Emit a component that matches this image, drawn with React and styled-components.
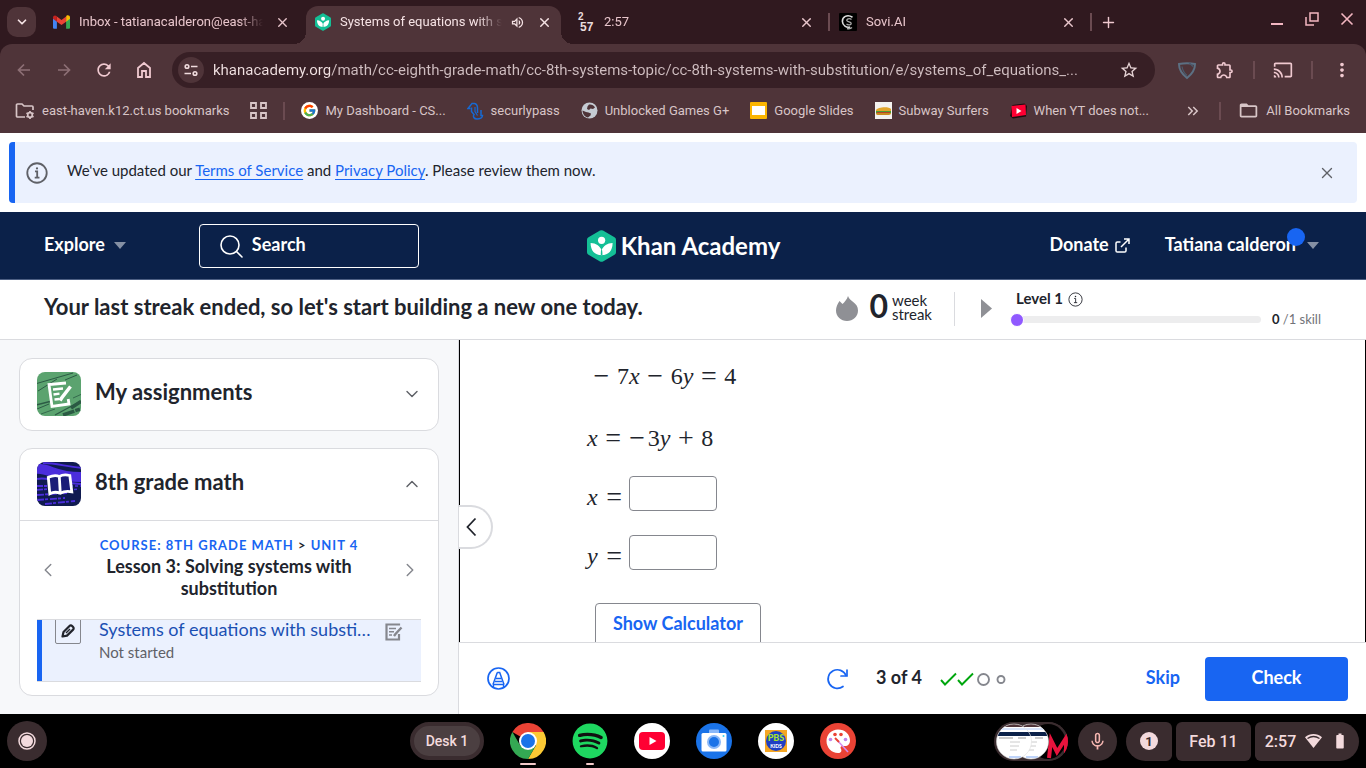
import React, { useState } from "react";
import styled, { createGlobalStyle } from "styled-components";
import { ChevronDown, ChevronUp, ChevronLeft, ChevronRight, X, Plus } from "lucide-react";
import {
  MdRefresh,
  MdOutlineExtension,
  MdCast,
  MdMoreVert,
  MdStarOutline,
  MdOutlineVolumeUp,
  MdFolderOpen,
  MdMicNone,
  MdBatteryFull,
  MdKeyboardDoubleArrowRight,
} from "react-icons/md";
import { FcGoogle } from "react-icons/fc";
import { FaSpotify } from "react-icons/fa";

const GlobalStyle = createGlobalStyle`
  * {
    box-sizing: border-box;
  }
  body {
    margin: 0;
    color: #21242c;
    background: #fff;
    font-family: Lato, "Liberation Sans", sans-serif;
  }
  button {
    padding: 0;
    border: none;
    background: none;
    color: inherit;
    font: inherit;
    cursor: pointer;
  }
  input {
    font: inherit;
    outline: none;
  }
  svg {
    display: block;
    flex: none;
  }
`;

const Screen = styled.div`
  display: flex;
  flex-direction: column;
  height: 100vh;
  overflow: hidden;
`;

/* ---------- browser ---------- */

const Browser = styled.header`
  flex: none;
  background: #30191f;
  color: #e9c6cc;
  font-family: Roboto, sans-serif;
  font-size: 13px;
`;

const TabStrip = styled.div`
  display: flex;
  align-items: center;
  height: 44px;
  padding-left: 7px;
`;

const TabSearch = styled.button`
  display: flex;
  align-items: center;
  justify-content: center;
  width: 29px;
  height: 30px;
  margin-right: 8px;
  border-radius: 10px;
  background: #4f3439;
  color: #f6e3e5;
`;

const Tab = styled.div`
  position: relative;
  display: flex;
  align-items: center;
  flex: 0 1 262px;
  min-width: 0;
  height: ${(props) => (props.$active ? "38px" : "30px")};
  align-self: ${(props) => (props.$active ? "flex-end" : "center")};
  padding: ${(props) => (props.$active ? "0 16px 6px 9px" : "0 16px 0 9px")};
  color: ${(props) => (props.$active ? "#f6e3e5" : "#e9c6cc")};
`;

const TabShape = styled.div`
  position: absolute;
  inset: 0 7px 0 0;
  border-radius: 12px 12px 0 0;
  background: #4f3439;
  &::before,
  &::after {
    content: "";
    position: absolute;
    bottom: 0;
    width: 12px;
    height: 12px;
  }
  &::before {
    right: 100%;
    background: radial-gradient(circle at 0 0, transparent 12px, #4f3439 12px);
  }
  &::after {
    left: 100%;
    background: radial-gradient(circle at 100% 0, transparent 12px, #4f3439 12px);
  }
`;

const TabLabel = styled.span`
  position: relative;
  flex: 1;
  min-width: 0;
  margin: 0 ${(props) => (props.$active ? "8px" : "12px")} 0 9px;
  overflow: hidden;
  white-space: nowrap;
  line-height: 20px;
  mask-image: linear-gradient(to left, transparent 0, #000 24px);
`;

const TabIcon = styled.span`
  position: relative;
  display: flex;
  margin-right: ${(props) => (props.$end ? "12px" : "0")};
`;

const Rule = styled.span`
  flex: none;
  width: 2px;
  height: 18px;
  margin: ${(props) => props.$margin || "0"};
  background: #6b4b51;
`;

const WindowButtons = styled.div`
  display: flex;
  align-items: center;
  gap: 21px;
  margin: 0 12px 6px auto;
  color: #f3b6c1;
`;

const Chrome = styled.div`
  border-radius: 12px 12px 0 0;
  background: #4f3439;
`;

const AddressRow = styled.div`
  display: flex;
  align-items: center;
  height: 52px;
  padding: 0 13px 0 12px;
`;

const NavButton = styled.button`
  display: flex;
  align-items: center;
  justify-content: center;
  width: 24px;
  height: 24px;
  margin: ${(props) => props.$margin || "0 16px 0 0"};
  color: ${(props) => (props.$dim ? "#8d6f75" : "#f0c9d0")};
`;

const Omnibox = styled.div`
  display: flex;
  align-items: center;
  flex: 1;
  height: 36px;
  padding: 0 16px 0 6px;
  border-radius: 18px;
  background: #371f25;
  color: #e6d3d5;
`;

const SiteInfo = styled.button`
  display: flex;
  align-items: center;
  justify-content: center;
  width: 26px;
  height: 26px;
  border-radius: 50%;
  background: #4f3439;
  color: #f0dcde;
`;

const AddressInput = styled.input`
  flex: 1;
  min-width: 0;
  margin: 0 8px 0 9px;
  padding: 0;
  border: none;
  font-size: 15px;
  line-height: 24px;
  color: transparent;
  background: linear-gradient(to right, #f2e2e3 117px, #d0bec1 117px);
  background-clip: text;
  -webkit-background-clip: text;
`;

const Extensions = styled.div`
  display: flex;
  align-items: center;
  gap: 18px;
  margin-left: 22px;
  color: #f0c9d0;
`;

const BookmarkBar = styled.nav`
  display: flex;
  align-items: center;
  gap: 21px;
  height: 37px;
  padding: 0 16px 8px 15px;
  color: #d8c5c7;
`;

const Bookmark = styled.a`
  display: flex;
  align-items: center;
  gap: 7px;
  color: inherit;
  line-height: 20px;
  text-decoration: none;
  white-space: nowrap;
`;

const BookmarkEnd = styled.div`
  display: flex;
  align-items: center;
  gap: 17px;
  margin-left: auto;
`;

/* ---------- site ---------- */

const Notice = styled.div`
  display: flex;
  align-items: center;
  flex: none;
  height: 61px;
  margin: 9px;
  padding: 0 21px 0 11px;
  border-left: 6px solid #1865f2;
  border-radius: 4px;
  background: #ebf1fe;
  font-size: 15px;
`;

const NoticeText = styled.p`
  flex: 1;
  margin: 0 0 6px 19px;
  line-height: 20px;
  a {
    color: #1865f2;
    text-underline-offset: 3px;
  }
`;

const SiteHeader = styled.div`
  display: grid;
  grid-template-columns: 1fr auto 1fr;
  align-items: center;
  flex: none;
  height: 68px;
  padding: 0 47px 0 44px;
  border-bottom: 1px solid #4d5f83;
  background: #0b2149;
  color: #fff;
  font-size: 18px;
  font-weight: 700;
`;

const HeaderSide = styled.div`
  display: flex;
  align-items: center;
  justify-content: ${(props) => (props.$end ? "flex-end" : "flex-start")};
  gap: ${(props) => (props.$end ? "35px" : "73px")};
`;

const HeaderItem = styled.button`
  position: relative;
  display: flex;
  align-items: center;
  gap: ${(props) => props.$gap};
  span {
    line-height: 24px;
    padding-bottom: 4px;
  }
`;

const NotifyDot = styled.i`
  position: absolute;
  top: -4px;
  right: 14px;
  width: 18px;
  height: 18px;
  border-radius: 50%;
  background: #1865f2;
`;

const SearchBox = styled.label`
  display: flex;
  align-items: center;
  width: 220px;
  height: 44px;
  padding-left: 19px;
  border: 1px solid #fff;
  border-radius: 4px;
  input {
    width: 150px;
    margin-left: 9px;
    padding: 0 0 4px;
    border: none;
    background: none;
    color: #fff;
    line-height: 24px;
  }
  input::placeholder {
    color: #fff;
    opacity: 1;
  }
`;

const Logo = styled.a`
  display: flex;
  align-items: center;
  gap: 5px;
  padding-left: 4px;
  color: #fff;
  font-size: 24px;
  font-weight: 700;
  line-height: 32px;
  text-decoration: none;
`;

const StreakBar = styled.section`
  display: flex;
  align-items: center;
  flex: none;
  height: 60px;
  padding: 0 45px 2px 44px;
  border-bottom: 1px solid #dadbdf;
`;

const StreakTitle = styled.h2`
  flex: 1;
  margin: 0;
  padding-bottom: 4px;
  font-size: 22px;
  line-height: 28px;
`;

const StreakCount = styled.div`
  display: flex;
  align-items: center;
  gap: 4px;
  margin-left: 11px;
  padding-right: 22px;
  height: 34px;
  border-right: 1px solid #dadbdf;
  font-size: 15px;
  line-height: 14px;
  span {
    padding-bottom: 4px;
  }
  strong {
    font-size: 32px;
    line-height: 32px;
    padding-bottom: 5px;
  }
`;

const Level = styled.div`
  display: flex;
  flex-direction: column;
  width: 305px;
`;

const LevelTitle = styled.div`
  display: flex;
  align-items: center;
  gap: 5px;
  height: 21px;
  font-size: 15px;
  font-weight: 700;
  line-height: 20px;
  span {
    padding-bottom: 4px;
  }
`;

const LevelRow = styled.div`
  display: flex;
  align-items: center;
  justify-content: space-between;
  color: #717378;
  font-size: 13px;
  line-height: 18px;
  white-space: nowrap;
  strong {
    color: #21242c;
  }
`;

const Track = styled.div`
  position: relative;
  width: 245px;
  height: 7px;
  border-radius: 4px;
  background: #ededee;
`;

const Knob = styled.div`
  position: absolute;
  top: -3px;
  left: -6px;
  width: 14px;
  height: 14px;
  border: 1px solid #fff;
  border-radius: 50%;
  background: #9059ff;
`;

const Main = styled.main`
  display: flex;
  flex: 1;
  min-height: 0;
`;

const Sidebar = styled.aside`
  display: flex;
  flex-direction: column;
  gap: 17px;
  flex: none;
  width: 459px;
  padding: 18px 19px;
  border-right: 1px solid #dadbdf;
  background: #f7f8fa;
`;

const Card = styled.section`
  min-width: 0;
  border: 1px solid #dadbdf;
  border-radius: 13px;
  background: #fff;
`;

const CardHead = styled.button`
  display: flex;
  align-items: center;
  gap: 14px;
  width: 100%;
  height: 71px;
  padding: 0 16px 1px 17px;
  font-size: 22px;
  font-weight: 700;
  color: #21242c;
  text-align: left;
  span {
    flex: 1;
    line-height: 28px;
    padding-bottom: 4px;
  }
`;

const CardBody = styled.div`
  padding: 0 17px 13px;
  border-top: 1px solid #dadbdf;
`;

const LessonNav = styled.div`
  display: flex;
  align-items: center;
  justify-content: space-between;
  height: 98px;
`;

const LessonTitle = styled.div`
  width: 270px;
  padding-bottom: 4px;
  text-align: center;
  h3 {
    margin: 0 0 2px;
    font-size: 18px;
    line-height: 22px;
  }
`;

const Crumbs = styled.div`
  font-size: 13px;
  font-weight: 700;
  line-height: 20px;
  letter-spacing: 1px;
  text-transform: uppercase;
  a {
    color: #1865f2;
    text-decoration: none;
  }
`;

const LessonList = styled.div`
  display: flex;
  flex-direction: column;
  justify-content: flex-end;
  height: 63px;
  overflow: hidden;
  border-top: 1px solid #dadbdf;
  border-bottom: 1px solid #dadbdf;
`;

const LessonRow = styled.a`
  display: flex;
  align-items: flex-start;
  flex: none;
  height: 75px;
  padding: 12px 18px 0 13px;
  border-left: 5px solid #1865f2;
  background: #ebf1fe;
  color: #1b50b3;
  text-decoration: none;
`;

const PencilBox = styled.span`
  display: flex;
  align-items: center;
  justify-content: center;
  flex: none;
  width: 26px;
  height: 26px;
  border: 1px solid #85878e;
  border-radius: 2px;
  color: #21242c;
`;

const LessonText = styled.span`
  display: flex;
  flex-direction: column;
  flex: 1;
  gap: 1px;
  min-width: 0;
  margin: 0 10px 0 18px;
  font-size: 18px;
  line-height: 22px;
  b {
    overflow: hidden;
    font-weight: 400;
    text-overflow: ellipsis;
    white-space: nowrap;
  }
  small {
    color: #5f6167;
    font-size: 15px;
  }
`;

const Content = styled.div`
  position: relative;
  display: flex;
  flex: 1;
  flex-direction: column;
  min-width: 0;
`;

const CollapseButton = styled.button`
  position: absolute;
  top: 165px;
  left: 0;
  display: flex;
  align-items: center;
  width: 34px;
  height: 44px;
  padding-left: 5px;
  border: 2px solid #dadbdf;
  border-left: none;
  border-radius: 0 22px 22px 0;
  background: #fff;
`;

const Exercise = styled.form`
  flex: 1;
  min-height: 0;
  overflow: hidden;
  padding: 12px 127px 0;
  border: solid #000;
  border-width: 0 1px;
`;

const MathRow = styled.div`
  display: flex;
  align-items: center;
  gap: ${(props) => (props.$answer ? "6px" : "7px")};
  height: ${(props) => (props.$answer ? "35px" : "48px")};
  margin-bottom: ${(props) => (props.$answer ? "24px" : "14px")};
  padding-left: ${(props) => (props.$shift ? "6px" : "0")};
  font-family: "Liberation Serif", serif;
  font-size: 24px;
  line-height: 28px;
`;

const MathLabel = styled.label`
  display: flex;
  gap: 8px;
  padding-top: 7px;
`;

const Op = styled.span`
  width: 17px;
  margin-right: ${(props) => (props.$sign ? "-5px" : "0")};
  font-size: 28px;
  text-align: center;
`;

const AnswerInput = styled.input`
  width: 88px;
  height: 35px;
  padding: 0 8px;
  border: 1px solid #85878e;
  border-radius: 4px;
  background: #fff;
  font-size: 20px;
`;

const CalculatorButton = styled.button`
  display: block;
  width: 166px;
  height: 44px;
  margin: 33px 0 0 8px;
  padding-bottom: 4px;
  border: 1px solid #85878e;
  border-radius: 4px;
  color: #1865f2;
  font-size: 18px;
  font-weight: 700;
`;

const TaskFooter = styled.footer`
  display: flex;
  align-items: center;
  flex: none;
  height: 72px;
  padding: 0 18px 0 28px;
  border-top: 1px solid #dadbdf;
  font-size: 18px;
  font-weight: 700;
`;

const Progress = styled.div`
  display: flex;
  align-items: center;
  gap: 18px;
  margin: 0 140px 0 auto;
`;

const FooterLabel = styled.span`
  padding: 0 0 4px 10px;
  line-height: 24px;
`;

const SkipButton = styled.button`
  padding-bottom: 4px;
  color: #1865f2;
`;

const CheckButton = styled.button`
  width: 143px;
  height: 44px;
  margin-left: 25px;
  padding-bottom: 4px;
  border-radius: 4px;
  background: #1865f2;
  color: #fff;
`;

/* ---------- shelf ---------- */

const Shelf = styled.footer`
  display: grid;
  grid-template-columns: 1fr auto 1fr;
  align-items: center;
  flex: none;
  height: 54px;
  padding: 0 7px;
  background: #000;
  color: #f3dadd;
  font-family: Roboto, sans-serif;
  font-size: 16px;
  font-weight: 500;
`;

const ShelfStart = styled.div`
  display: flex;
  align-items: center;
  justify-content: space-between;
  padding-right: 26px;
`;

const Launcher = styled.button`
  display: flex;
  align-items: center;
  justify-content: center;
  width: 40px;
  height: 40px;
  border-radius: 50%;
  background: #3a2c2f;
`;

const DeskButton = styled.button`
  width: 74px;
  height: 38px;
  border: 4px solid #3a2c2f;
  border-radius: 19px;
  background: #4b3f41;
  font-size: 14px;
`;

const Apps = styled.div`
  display: flex;
  gap: 26px;
`;

const AppButton = styled.button`
  position: relative;
  width: 36px;
  height: 36px;
  &::after {
    content: "";
    position: absolute;
    top: 40px;
    left: 50%;
    width: ${(props) => props.$mark || 0}px;
    height: 2px;
    border-radius: 1px;
    background: #f3c9c9;
    transform: translateX(-50%);
  }
`;

const Tray = styled.div`
  display: flex;
  align-items: center;
  justify-content: flex-end;
  gap: 4px;
`;

const TrayButton = styled.button`
  display: flex;
  align-items: center;
  justify-content: center;
  gap: 9px;
  width: ${(props) => props.$width};
  height: 39px;
  margin-right: ${(props) => props.$space || "0"};
  border-radius: ${(props) => props.$radius || "6px"};
  background: #3a2c2f;
  overflow: hidden;
`;

/* ---------- drawings ---------- */

const KhanMark = ({ width = 29, height = 32 }) => (
  <svg width={width} height={height} viewBox="0 0 29 32">
    <path
      d="M13 .6a3 3 0 0 1 3 0l11.5 6.6A3 3 0 0 1 29 9.800v12.400a3 3 0 0 1-1.500 2.600L16 31.400a3 3 0 0 1-3 0L1.500 24.800A3 3 0 0 1 0 22.200V9.800a3 3 0 0 1 1.500-2.600z"
      fill="#14bf96"
    />
    <circle cx="14.600" cy="10.300" r="3.600" fill="#fff" />
    <path
      d="M3.600 13c5.500.2 9 3 11 6.900 2-3.900 5.500-6.700 11-6.900 0 7.500-4 12.200-11 12.200S3.600 20.500 3.600 13z"
      fill="#fff"
    />
    <path d="M13.800 25.200v-2c0-2 .3-3.200.8-4.300.5 1.100.8 2.300.8 4.300v2z" fill="#14bf96" />
  </svg>
);

const GmailIcon = () => (
  <svg width="17" height="14" viewBox="0 0 24 19">
    <path d="M0 3v14.500A1.500 1.500 0 0 0 1.500 19H5.500V8z" fill="#4285f4" />
    <path d="M24 3v14.500a1.500 1.500 0 0 1-1.500 1.500h-4V8z" fill="#34a853" />
    <path d="M18.500 2v7L24 5V3c0-2.600-3-3.800-5-2.300z" fill="#fbbc04" />
    <path d="M5.500 9V1.600L12 6.500l6.500-4.900V9L12 13.900z" fill="#ea4335" />
    <path d="M0 3v2l5.500 4V1.600L5 1.100C3-.8 0 .4 0 3z" fill="#c5221f" />
  </svg>
);

const SoviIcon = () => (
  <svg width="18" height="18" viewBox="0 0 18 18">
    <rect width="18" height="18" rx="1" fill="#000" />
    <path d="M13.500 4.200C8 .8 3.200 4 3.400 8.500c.2 4 4 6.500 7.800 5.400" fill="none" stroke="#ddd" strokeWidth="1.600" />
    <path d="M12.500 6.500c-2-1.600-5.300-.6-4.600 1.200.6 1.500 4.300.7 4.300 2.700 0 1.700-3.200 1.800-4.700.5M8 15.500c2 .5 4 0 5-1" fill="none" stroke="#aaa" strokeWidth="1.300" />
  </svg>
);

const ClockFavicon = () => (
  <svg width="18" height="22" viewBox="0 0 18 22" fontFamily="Liberation Sans" fontWeight="700" fill="#e8dcdd">
    <text x="1" y="9" fontSize="10">2</text>
    <text x="3" y="20" fontSize="12">57</text>
  </svg>
);

const ArrowIcon = ({ flip }) => (
  <svg width="16" height="16" viewBox="0 0 16 16" fill="none" stroke="currentColor" strokeWidth="1.700">
    {flip ? <path d="M2 8h11M8 2.500 13.500 8 8 13.500" /> : <path d="M14 8H3M8 2.500 2.500 8 8 13.500" />}
  </svg>
);

const HomeIcon = () => (
  <svg width="16" height="18" viewBox="0 0 16 18" fill="none" stroke="currentColor" strokeWidth="1.800">
    <path d="M2 7 8 2l6 5v9h-4v-6H6v6H2z" />
  </svg>
);

const TuneIcon = () => (
  <svg width="14" height="14" viewBox="0 0 14 14" fill="none" stroke="currentColor" strokeWidth="1.600">
    <circle cx="3" cy="3.500" r="1.800" />
    <circle cx="11" cy="10.500" r="1.800" />
    <path d="M7 3.500h6.500M.5 10.500H7" />
  </svg>
);

const ShieldIcon = () => (
  <svg width="20" height="20" viewBox="0 0 20 20" fill="none" stroke="#5c7083" strokeWidth="2">
    <path d="M2 4c5-1 11-1 16 0 0 5.500-3.500 10.500-8 14-4.500-3.500-8-8.500-8-14z" />
    <path d="M5 6.500c.5 3.500 2 6.500 5 9M12 2.500l4 4" stroke="#4a5a6c" strokeWidth="1.200" />
  </svg>
);

const FolderGear = () => (
  <svg width="20" height="18" viewBox="0 0 20 18" fill="none" stroke="currentColor" strokeWidth="1.700">
    <path d="M10 15H2.500A1 1 0 0 1 1.500 14V3a1 1 0 0 1 1-1H7l2 2h8a1 1 0 0 1 1 1v3" />
    <circle cx="15" cy="13" r="2.300" />
    <path d="M15 9v1.500M15 15.500V17M11.500 11l1.300.8M17.200 14.200l1.300.8M11.500 15l1.300-.8M17.200 11.800l1.300-.8" />
  </svg>
);

const AppsIcon = () => (
  <svg width="17" height="17" viewBox="0 0 17 17" fill="none" stroke="currentColor" strokeWidth="1.800">
    <path d="M1 1h5v5H1zM11 1h5v5h-5zM1 11h5v5H1zM11 11h5v5h-5z" />
  </svg>
);

const GoogleIcon = () => (
  <svg width="17" height="17" viewBox="0 0 17 17">
    <circle cx="8.500" cy="8.500" r="8.500" fill="#fff" />
    <FcGoogle x="1.500" y="1.500" size={14} />
  </svg>
);

const SecurlyIcon = () => (
  <svg width="17" height="18" viewBox="0 0 17 18" fill="none" stroke="#1769d2" strokeWidth="1.500">
    <path d="M3.500 6.500H1L5 1.500h2.500C10 2 10.500 4 10.500 6v5" />
    <path d="M4.500 5.500v4L7 12.500C5.500 14.500 7 17 10 17s5.500-1.500 5.500-3.500h-1.500V8" />
    <path d="M8 5v4.500l2.500 4" strokeWidth="1.200" />
  </svg>
);

const GlobeIcon = () => (
  <svg width="17" height="17" viewBox="0 0 17 17">
    <circle cx="8.500" cy="8.500" r="8" fill="#c5cbd3" />
    <path d="M8 2.500c2-.5 5 .5 6 3l-2 1.500-2.500-.5L8 8 6 7l.5-2.500z" fill="#4f3439" />
    <path d="M1.500 8.500 5 10l2.500.5 2.500 1-.5 2L7 15.500C4 15 1.500 12 1.500 8.500z" fill="#4f3439" />
  </svg>
);

const SlidesIcon = () => (
  <svg width="17" height="17" viewBox="0 0 17 17">
    <rect width="17" height="17" rx="1" fill="#fbb500" />
    <rect x="2" y="4" width="13" height="9" fill="#fff" />
  </svg>
);

const SubwayIcon = () => (
  <svg width="17" height="17" viewBox="0 0 17 17">
    <rect width="17" height="17" fill="#f4f2ef" />
    <path d="M1 8c1-3 13-4 15-1v2H1z" fill="#e2a52b" />
    <path d="M1 9h15v2H1z" fill="#4a9c36" />
    <path d="M2 10h13v1H2z" fill="#b5432a" />
    <path d="M1 11h15c0 2-2 2-4 2H4c-2 0-3 0-3-2z" fill="#c98a1e" />
  </svg>
);

const TiltedPlay = () => (
  <svg width="17" height="16" viewBox="0 0 17 16">
    <path d="m2.500 2 12-1.500L17 3l-1 10.500L3 15.500 0 13z" fill="#1c0b0e" />
    <path d="m1.500 3 14-1.500.5 10.500L2 14z" fill="#ff0033" />
    <path d="M6.500 5v6l5-3z" fill="#fff" />
  </svg>
);

const InfoIcon = ({ size, color, weight }) => (
  <svg width={size} height={size} viewBox="0 0 24 24" fill="none" stroke={color} strokeWidth={weight}>
    <circle cx="12" cy="12" r="10.600" />
    <path d="M9.800 10.300h2.400V17M9.500 17h5.200" />
    <circle cx="12" cy="7" r="1.200" fill={color} stroke="none" />
  </svg>
);

const SearchIcon = () => (
  <svg width="24" height="24" viewBox="0 0 24 24" fill="none" stroke="currentColor" strokeWidth="1.600">
    <circle cx="11" cy="11" r="9" />
    <path d="m17.500 17.500 5.500 5.500" strokeLinecap="round" />
  </svg>
);

const Caret = () => (
  <svg width="12" height="7" viewBox="0 0 12 7">
    <path d="M0 0h12L6 7z" fill="#8590a4" />
  </svg>
);

const ExternalIcon = () => (
  <svg width="15" height="15" viewBox="0 0 15 15" fill="none" stroke="currentColor" strokeWidth="1.500">
    <path d="M5.500 4H2.300C1.400 4 1 4.400 1 5.200v7.500c0 .8.400 1.300 1.300 1.300h7.400c.8 0 1.300-.5 1.300-1.300V9.500M6 9l8-8M9 1h5v5" />
  </svg>
);

const FlameIcon = () => (
  <svg width="22" height="25" viewBox="0 0 22 25">
    <path d="M12 0c1 3 3.200 4.500 5.200 6C20 8.200 22 10.500 22 14.500 22 20.500 17 25 11 25S0 20.500 0 14.500C0 11 1.500 8 3.500 5l3 3C8.500 6 11 3.500 12 0z" fill="#8f9095" />
  </svg>
);

const AssignmentArt = () => (
  <svg width="44" height="44" viewBox="0 0 44 44">
    <clipPath id="art-a">
      <rect width="44" height="44" rx="8" />
    </clipPath>
    <g clipPath="url(#art-a)">
      <rect width="44" height="44" fill="#5ba36f" />
      <g fill="none" stroke="#2b5a44">
        <path d="M-2 12 36 1M1 19 20 7M0 37l12-5M28 8l12-5" strokeWidth="1" />
        <path d="M18 43 44 29M-1 33l16-4" strokeWidth="1.300" />
        <path d="m26 43 20-7M34 36l12-8" strokeWidth="3.500" strokeDasharray="12 1 5 2" />
        <path d="m4 42 14-5M36 26l9-4" strokeWidth=".8" />
      </g>
      <g fill="none" stroke="#fff" strokeWidth="2.800">
        <path d="m29 11-17 1.500 3 22 17-2.500-.8-5" />
        <path d="m16 17.500 10-1M16.500 22.500l6-.8M17.500 27.500l5-.5" strokeWidth="2.300" />
        <path d="M33.500 14.500 25 25.500l-2 3" strokeWidth="3.500" />
      </g>
    </g>
  </svg>
);

const BookArt = () => (
  <svg width="44" height="44" viewBox="0 0 44 44">
    <clipPath id="art-b">
      <rect width="44" height="44" rx="8" />
    </clipPath>
    <g clipPath="url(#art-b)">
      <rect width="44" height="44" fill="#101b50" />
      <g fill="none" stroke="#4b2ddc">
        <path d="M-2 7c14-2 20 9 48 8" strokeWidth="10" />
        <path d="M0 17c10-3 30 5 45 5M6 1c14 0 24 4 40 5" strokeWidth="2" />
        <path d="M-1 24h16M-1 28l13-1M0 33l30-2M0 38l28-2M8 42l30-3" strokeWidth="1.800" strokeDasharray="7 1 3 2" />
        <path d="M33 24h12M32 28l10-1" strokeWidth="1.500" strokeDasharray="3 2" />
      </g>
      <path
        d="M22.300 14.500c-3-1.500-7-1-11 .8l1.500 16.500c3.500-2 7-2 10.500-.5 3.500-2 6.500-2.500 11.500-1.500l-2-16.300c-4-.9-7.500-.8-10.500 1zM22.300 14.500l1 17"
        fill="#1a1c78"
        stroke="#fff"
        strokeWidth="2.800"
      />
    </g>
  </svg>
);

const PencilIcon = () => (
  <svg width="14" height="14" viewBox="0 0 14 14">
    <path d="M1.500 12.500 2.500 8 8.500 2a1.800 1.800 0 0 1 2.600 0l1 1a1.800 1.800 0 0 1 0 2.600L6 11.600z" fill="none" stroke="currentColor" strokeWidth="2.200" strokeLinejoin="round" />
    <path d="M5 9 9 5" stroke="currentColor" strokeWidth="1.400" />
  </svg>
);

const SheetIcon = () => (
  <svg width="18" height="24" viewBox="0 -5 18 24" fill="none" stroke="#85878e" strokeWidth="2.200">
    <path d="M14 2.500V1.500H1.500v15H14V11" />
    <path d="M4 5.500h7M4 8.800h5M4 12h3" strokeWidth="1.600" />
    <path d="m16.500 4.500-6 6.500-1.500 2" strokeWidth="2.400" />
  </svg>
);

const AnnotateIcon = () => (
  <svg width="23" height="23" viewBox="0 0 23 23" fill="none" stroke="#1865f2">
    <circle cx="11.500" cy="11.500" r="10.500" strokeWidth="1.700" />
    <path d="M10.300 5.500h2.400L17 17.500M10.300 5.500 6 17.500M9 11.500h5M8 14.500h7" strokeWidth="1.500" />
    <path d="M6.500 20.500v-3h10v3" strokeWidth="1.400" />
  </svg>
);

const RestartIcon = () => (
  <svg width="22" height="22" viewBox="0 0 22 22" fill="none" stroke="#1865f2" strokeWidth="1.700" strokeLinecap="round">
    <path d="M20 7.500A9.300 9.300 0 1 0 17 18.500" />
    <path d="M21 2v6h-6" />
  </svg>
);

const ResultMarks = () => (
  <svg width="66" height="16" viewBox="0 0 66 16" fill="none" strokeWidth="1.900">
    <path d="m1 9 4 4.500L16 2.500M18 9l4 4.500L33 2.500" stroke="#00a60e" />
    <circle cx="43.500" cy="8.500" r="5.500" stroke="#85878e" />
    <circle cx="61" cy="8.500" r="3.500" stroke="#85878e" />
  </svg>
);

const ChromeIcon = () => (
  <svg width="36" height="36" viewBox="0 0 36 36">
    <path d="M18 18 2.400 9A18 18 0 0 1 33.600 9z" fill="#ea4335" />
    <path d="M18 9h15.600A18 18 0 0 1 18 36l7.800-13.500z" fill="#fbc934" />
    <path d="M18 36A18 18 0 0 1 2.400 9l7.800 13.500L18 27l7.800-4.500z" fill="#34a853" />
    <circle cx="18" cy="18" r="9" fill="#fff" />
    <circle cx="18" cy="18" r="7" fill="#1a73e8" />
  </svg>
);

const SpotifyIcon = () => (
  <svg width="36" height="36" viewBox="0 0 36 36">
    <circle cx="18" cy="18" r="17" fill="#111" />
    <FaSpotify size={36} color="#1ed760" />
  </svg>
);

const YoutubeIcon = () => (
  <svg width="36" height="36" viewBox="0 0 36 36">
    <circle cx="18" cy="18" r="18" fill="#fff" />
    <rect x="5" y="9" width="26" height="18" rx="4" fill="#ff0033" />
    <path d="M15.500 14v8l7-4z" fill="#fff" />
  </svg>
);

const CameraIcon = () => (
  <svg width="36" height="36" viewBox="0 0 36 36">
    <circle cx="18" cy="18" r="18" fill="#1a73e8" />
    <path d="M13 9V7.500A1 1 0 0 1 14 6.500h8a1 1 0 0 1 1 1V10H13z" fill="#8ab8f8" />
    <rect x="5.500" y="10" width="25" height="18.500" rx="1.500" fill="#fff" />
    <circle cx="18" cy="19" r="7" fill="#8ab8f8" />
    <circle cx="18" cy="19" r="5" fill="#1a73e8" />
    <circle cx="27.500" cy="13" r="1" fill="#38d3f5" />
  </svg>
);

const PbsIcon = () => (
  <svg width="36" height="36" viewBox="0 0 36 36" fontFamily="Lato" fontWeight="900" textAnchor="middle">
    <circle cx="18" cy="18" r="18" fill="#fff" />
    <rect x="7" y="7" width="22" height="22" fill="#f5a623" />
    <circle cx="18" cy="18" r="10" fill="#1f3fc4" />
    <text x="18" y="18" fontSize="9" fill="#a6e22e">PBS</text>
    <text x="18" y="25" fontSize="5" fill="#fff">KIDS</text>
  </svg>
);

const PaletteIcon = () => (
  <svg width="36" height="36" viewBox="0 0 36 36">
    <circle cx="18" cy="18" r="18" fill="#ea4335" />
    <path d="M18 6.500c7 0 12 4.800 12 11 0 3.500-2 5.500-5 5.500h-2.500c-2 0-2.500 1.500-1.500 3 1 2 0 4-3 4C11.500 30 6.500 24.500 6.500 18S11.500 6.500 18 6.500z" fill="#fff" />
    <circle cx="10.500" cy="16.500" r="1.800" fill="#c084e8" />
    <circle cx="15" cy="11.500" r="1.800" fill="#ea4335" />
    <circle cx="21" cy="11.500" r="1.800" fill="#ea4335" />
    <circle cx="25.500" cy="16.500" r="1.800" fill="#c084e8" />
    <path d="m17 17 11 12" stroke="#d58cf0" strokeWidth="1.600" />
    <path d="m15 15 4 4" stroke="#ea4335" strokeWidth="2" />
  </svg>
);

const TotePreview = () => (
  <svg width="73" height="39" viewBox="0 0 73 39">
    <rect width="73" height="39" rx="19.500" fill="#3a2c2f" />
    <circle cx="53" cy="19.500" r="17.500" fill="#000" />
    <path d="M54 36 56 18l6 12 9-14v17" fill="none" stroke="#e9133d" strokeWidth="4" />
    {[36, 19].map((cx, i) => (
      <g key={cx}>
        <clipPath id={`tote-${i}`}>
          <circle cx={cx} cy="19.500" r="17.500" />
        </clipPath>
        <g clipPath={`url(#tote-${i})`}>
          <rect x={cx - 18} width="36" height="39" fill="#fff" />
          <rect x={cx - 18} width="36" height="5" fill="#4f3439" />
          <rect x={cx - 18} y="6" width="36" height="2" fill="#d7e3fa" />
          <rect x={cx - 18} y="10" width="36" height="4" fill="#0b2149" />
          <path d={`M${cx - 15} 16h14M${cx + 4} 16h8`} stroke="#999" />
          <path d={`M${cx - 4} 20h10M${cx - 4} 24h9M${cx - 4} 28h7`} stroke="#ccc" />
          <path d={`M${cx - 5} 35h12`} stroke="#7fa8f5" />
        </g>
        <circle cx={cx} cy="19.500" r="17.500" fill="none" stroke="#ddd" strokeWidth=".6" />
      </g>
    ))}
  </svg>
);

const WifiIcon = () => (
  <svg width="17" height="14" viewBox="0 0 17 14">
    <path d="M8.500 14 0 3.200C5-1 12-1 17 3.200z" fill="currentColor" />
    <path d="M2.500 4.500c4-2.700 8-2.700 12 0" fill="none" stroke="#3a2c2f" strokeWidth="1.300" />
  </svg>
);

/* ---------- page ---------- */

const bookmarks = [
  { name: "My Dashboard - CS...", icon: <GoogleIcon /> },
  { name: "securlypass", icon: <SecurlyIcon /> },
  { name: "Unblocked Games G+", icon: <GlobeIcon /> },
  { name: "Google Slides", icon: <SlidesIcon /> },
  { name: "Subway Surfers", icon: <SubwayIcon /> },
  { name: "When YT does not...", icon: <TiltedPlay /> },
];

const tabs = [
  { name: "Inbox - tatianacalderon@east-haven", icon: <GmailIcon /> },
  { name: "Systems of equations with substitution", icon: <KhanMark width={16} height={18} />, active: true },
  { name: "2:57", icon: <ClockFavicon />, rule: true },
  { name: "Sovi.AI", icon: <SoviIcon />, rule: true },
];

const apps = [
  { name: "Chrome", icon: <ChromeIcon />, mark: 16 },
  { name: "Spotify", icon: <SpotifyIcon />, mark: 8 },
  { name: "YouTube", icon: <YoutubeIcon /> },
  { name: "Camera", icon: <CameraIcon /> },
  { name: "PBS Kids", icon: <PbsIcon /> },
  { name: "Canvas", icon: <PaletteIcon /> },
];

const BrowserBar = () => {
  const [url, setUrl] = useState(
    "khanacademy.org/math/cc-eighth-grade-math/cc-8th-systems-topic/cc-8th-systems-with-substitution/e/systems_of_equations_..."
  );

  return (
    <Browser>
      <TabStrip>
        <TabSearch aria-label="Search tabs">
          <ChevronDown size={14} strokeWidth={3} />
        </TabSearch>
        {tabs.map((tab) => (
          <React.Fragment key={tab.name}>
            <Tab $active={tab.active}>
              {tab.active && <TabShape />}
              <TabIcon>{tab.icon}</TabIcon>
              <TabLabel $active={tab.active}>{tab.name}</TabLabel>
              {tab.active && (
                <TabIcon $end>
                  <MdOutlineVolumeUp size={15} />
                </TabIcon>
              )}
              <TabIcon as="button" aria-label="Close tab">
                <X size={15} strokeWidth={2.2} />
              </TabIcon>
            </Tab>
            {tab.rule && <Rule $margin="0 0 0 -2px" />}
          </React.Fragment>
        ))}
        <NavButton aria-label="New tab" $margin="0 16px 0 4px">
          <Plus size={17} strokeWidth={2} />
        </NavButton>
        <WindowButtons>
          <button aria-label="Minimize">
            <svg width="14" height="14" viewBox="0 0 14 14" stroke="currentColor" strokeWidth="2">
              <path d="M1 12h12" />
            </svg>
          </button>
          <button aria-label="Restore">
            <svg width="14" height="14" viewBox="0 0 14 14" fill="none" stroke="currentColor" strokeWidth="1.500">
              <path d="M5 1h8v8H5zM1 5v8h8" />
            </svg>
          </button>
          <button aria-label="Close">
            <svg width="14" height="14" viewBox="0 0 14 14" stroke="currentColor" strokeWidth="1.600">
              <path d="m1.500 1.500 11 11m0-11-11 11" />
            </svg>
          </button>
        </WindowButtons>
      </TabStrip>
      <Chrome>
        <AddressRow>
          <NavButton $dim aria-label="Back">
            <ArrowIcon />
          </NavButton>
          <NavButton $dim aria-label="Forward">
            <ArrowIcon flip />
          </NavButton>
          <NavButton aria-label="Reload">
            <MdRefresh size={20} />
          </NavButton>
          <NavButton aria-label="Home">
            <HomeIcon />
          </NavButton>
          <Omnibox>
            <SiteInfo aria-label="Site information">
              <TuneIcon />
            </SiteInfo>
            <AddressInput aria-label="Address" value={url} onChange={(e) => setUrl(e.target.value)} />
            <MdStarOutline size={20} />
          </Omnibox>
          <Extensions>
            <ShieldIcon />
            <MdOutlineExtension size={20} />
            <Rule />
            <MdCast size={20} />
            <Rule />
            <MdMoreVert size={22} />
          </Extensions>
        </AddressRow>
        <BookmarkBar>
          <Bookmark href="#">
            <FolderGear />
            east-haven.k12.ct.us bookmarks
          </Bookmark>
          <AppsIcon />
          <Rule $margin="0 -5px" />
          {bookmarks.map((item) => (
            <Bookmark href="#" key={item.name}>
              {item.icon}
              {item.name}
            </Bookmark>
          ))}
          <BookmarkEnd>
            <MdKeyboardDoubleArrowRight size={18} />
            <Rule />
            <Bookmark href="#">
              <MdFolderOpen size={21} />
              All Bookmarks
            </Bookmark>
          </BookmarkEnd>
        </BookmarkBar>
      </Chrome>
    </Browser>
  );
};

const App = () => {
  const [answers, setAnswers] = useState({ x: "", y: "" });

  const handleAnswer = (e) => {
    setAnswers((prev) => ({ ...prev, [e.target.name]: e.target.value }));
  };

  return (
    <Screen>
      <GlobalStyle />
      <BrowserBar />

      <Notice>
        <InfoIcon size={22} color="#5f6167" weight={2} />
        <NoticeText>
          We've updated our <a href="#">Terms of Service</a> and <a href="#">Privacy Policy</a>. Please review them now.
        </NoticeText>
        <button aria-label="Dismiss">
          <X size={18} strokeWidth={1.8} color="#5f6167" />
        </button>
      </Notice>

      <SiteHeader>
        <HeaderSide>
          <HeaderItem $gap="9px">
            <span>Explore</span>
            <Caret />
          </HeaderItem>
          <SearchBox>
            <SearchIcon />
            <input type="text" placeholder="Search" aria-label="Search" />
          </SearchBox>
        </HeaderSide>
        <Logo href="#">
          <KhanMark />
          Khan Academy
        </Logo>
        <HeaderSide $end>
          <HeaderItem $gap="6px">
            <span>Donate</span>
            <ExternalIcon />
          </HeaderItem>
          <HeaderItem $gap="11px">
            <span>Tatiana calderon</span>
            <Caret />
            <NotifyDot />
          </HeaderItem>
        </HeaderSide>
      </SiteHeader>

      <StreakBar>
        <StreakTitle>Your last streak ended, so let's start building a new one today.</StreakTitle>
        <FlameIcon />
        <StreakCount>
          <strong>0</strong>
          <span>
            week
            <br />
            streak
          </span>
        </StreakCount>
        <svg width="61" height="19" viewBox="0 0 61 19">
          <path d="M26 0v19l11-9.500z" fill="#8f9095" />
        </svg>
        <Level>
          <LevelTitle>
            <span>Level 1</span>
            <InfoIcon size={15} color="#21242c" weight={1.4} />
          </LevelTitle>
          <LevelRow>
            <Track role="progressbar" aria-label="Level 1" aria-valuenow={0} aria-valuemax={1}>
              <Knob />
            </Track>
            <span>
              <strong>0</strong> /1 skill
            </span>
          </LevelRow>
        </Level>
      </StreakBar>

      <Main>
        <Sidebar>
          <Card>
            <CardHead>
              <AssignmentArt />
              <span>My assignments</span>
              <ChevronDown size={20} strokeWidth={1.7} color="#5f6167" />
            </CardHead>
          </Card>
          <Card>
            <CardHead>
              <BookArt />
              <span>8th grade math</span>
              <ChevronUp size={20} strokeWidth={1.7} color="#5f6167" />
            </CardHead>
            <CardBody>
              <LessonNav>
                <button aria-label="Previous lesson">
                  <ChevronLeft size={22} strokeWidth={1.6} color="#85878e" />
                </button>
                <LessonTitle>
                  <Crumbs>
                    <a href="#">Course: 8th grade math</a> &gt; <a href="#">Unit 4</a>
                  </Crumbs>
                  <h3>Lesson 3: Solving systems with substitution</h3>
                </LessonTitle>
                <button aria-label="Next lesson">
                  <ChevronRight size={22} strokeWidth={1.6} color="#85878e" />
                </button>
              </LessonNav>
              <LessonList>
                <LessonRow href="#">
                  <PencilBox>
                    <PencilIcon />
                  </PencilBox>
                  <LessonText>
                    <b>Systems of equations with substitution</b>
                    <small>Not started</small>
                  </LessonText>
                  <SheetIcon />
                </LessonRow>
              </LessonList>
            </CardBody>
          </Card>
        </Sidebar>

        <Content>
          <Exercise>
            <MathRow $shift>
              <Op>−</Op>
              <span>7<i>x</i></span>
              <Op>−</Op>
              <span>6<i>y</i></span>
              <Op>=</Op>
              <span>4</span>
            </MathRow>
            <MathRow>
              <i>x</i>
              <Op>=</Op>
              <Op $sign>−</Op>
              <span>3<i>y</i></span>
              <Op>+</Op>
              <span>8</span>
            </MathRow>
            <MathRow $answer>
              <MathLabel htmlFor="answer-x">
                <i>x</i>
                <Op>=</Op>
              </MathLabel>
              <AnswerInput id="answer-x" name="x" value={answers.x} onChange={handleAnswer} />
            </MathRow>
            <MathRow $answer>
              <MathLabel htmlFor="answer-y">
                <i>y</i>
                <Op>=</Op>
              </MathLabel>
              <AnswerInput id="answer-y" name="y" value={answers.y} onChange={handleAnswer} />
            </MathRow>
            <CalculatorButton type="button">Show Calculator</CalculatorButton>
          </Exercise>
          <TaskFooter>
            <button aria-label="Annotate">
              <AnnotateIcon />
            </button>
            <Progress>
              <RestartIcon />
              <FooterLabel>3 of 4</FooterLabel>
              <ResultMarks />
            </Progress>
            <SkipButton>Skip</SkipButton>
            <CheckButton>Check</CheckButton>
          </TaskFooter>
          <CollapseButton aria-label="Collapse sidebar">
            <svg width="14" height="22" viewBox="0 0 14 22" fill="none" stroke="currentColor" strokeWidth="1.800">
              <path d="m11.500 2.500-8 8.500 8 8.500" />
            </svg>
          </CollapseButton>
        </Content>
      </Main>

      <Shelf>
        <ShelfStart>
          <Launcher aria-label="Launcher">
            <svg width="18" height="18" viewBox="0 0 18 18">
              <circle cx="9" cy="9" r="8" fill="none" stroke="#f3dadd" strokeWidth="1.500" />
              <circle cx="9" cy="9" r="6" fill="#f3dadd" />
            </svg>
          </Launcher>
          <DeskButton>Desk 1</DeskButton>
        </ShelfStart>
        <Apps>
          {apps.map((app) => (
            <AppButton key={app.name} aria-label={app.name} $mark={app.mark}>
              {app.icon}
            </AppButton>
          ))}
        </Apps>
        <Tray>
          <TrayButton aria-label="Recent files" $width="74px" $radius="20px" $space="6px">
            <TotePreview />
          </TrayButton>
          <TrayButton aria-label="Microphone" $width="39px" $radius="20px" $space="5px">
            <MdMicNone size={21} color="#f5b5b0" />
          </TrayButton>
          <TrayButton aria-label="1 notification" $width="46px" $radius="20px 6px 6px 20px">
            <svg width="18" height="18" viewBox="0 0 18 18">
              <circle cx="9" cy="9" r="9" fill="#f3dadd" />
              <text x="9" y="14" fontSize="13" fontWeight="700" textAnchor="middle" fill="#3a2c2f">1</text>
            </svg>
          </TrayButton>
          <TrayButton $width="75px">Feb 11</TrayButton>
          <TrayButton $width="104px" $radius="6px 20px 20px 6px">
            2:57
            <WifiIcon />
            <MdBatteryFull size={18} />
          </TrayButton>
        </Tray>
      </Shelf>
    </Screen>
  );
};

export default App;
